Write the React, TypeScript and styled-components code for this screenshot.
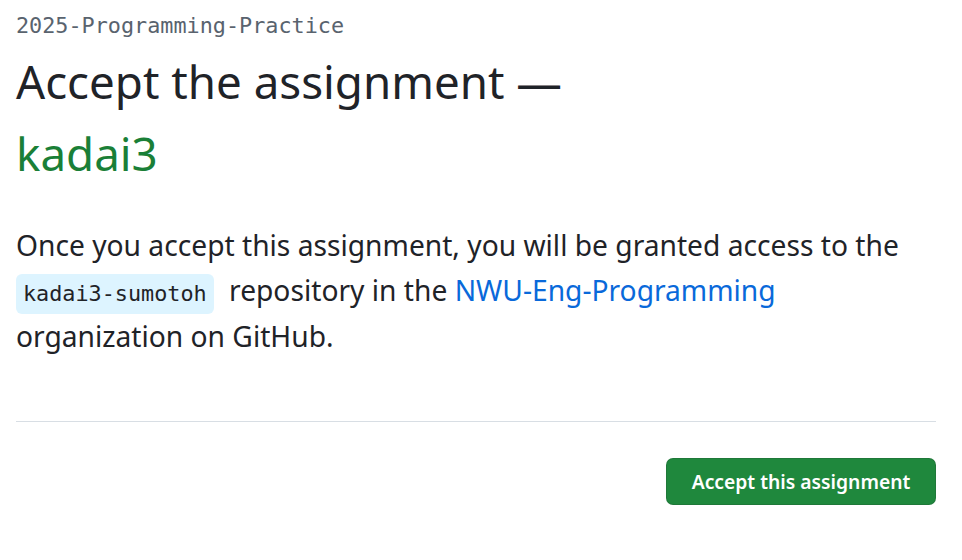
import React from "react";
import styled, { createGlobalStyle } from "styled-components";

const GlobalStyle = createGlobalStyle`
  html, body { margin: 0; padding: 0; background: #ffffff; }
  body {
    font-family: "Noto Sans", "Open Sans", sans-serif;
    color: #1f2328;
  }
`;

const Page = styled.main`
  width: 920px;
  padding: 12px 26px 0 16px;
  display: flex;
  flex-direction: column;
`;

const OrgLabel = styled.div`
  font-family: "DejaVu Sans Mono", "Liberation Mono", monospace;
  font-size: 21.8px;
  line-height: 28px;
  color: #59636e;
`;

const Title = styled.h1`
  margin: 5px 0 0;
  font-size: 45.7px;
  line-height: 72px;
  font-weight: 400;
  color: #1f2328;
`;

const AssignmentName = styled.span`
  color: #1a7f37;
`;

const Description = styled.p`
  margin: 34px 0 0;
  font-size: 28.2px;
  line-height: 45px;
  color: #1f2328;
`;

const Code = styled.code`
  display: inline-block;
  font-family: "DejaVu Sans Mono", "Liberation Mono", monospace;
  font-size: 21.8px;
  line-height: 26px;
  padding: 7px 7px;
  margin-right: 8px;
  background: #ddf4ff;
  border-radius: 6px;
  color: #1f2328;
`;

const OrgLink = styled.a`
  color: #0969da;
  text-decoration: none;
`;

const Divider = styled.hr`
  margin: 62px 0 0;
  border: 0;
  border-top: 1px solid #d8dee4;
  height: 0;
`;

const Actions = styled.div`
  display: flex;
  justify-content: flex-end;
  padding-top: 36px;
`;

const AcceptButton = styled.button`
  width: 270px;
  height: 47px;
  border: 1px solid rgba(31, 35, 40, 0.15);
  border-radius: 7px;
  background: #1f883d;
  color: #ffffff;
  font-family: "Noto Sans", "Open Sans", sans-serif;
  font-size: 19.3px;
  font-weight: 600;
  cursor: pointer;
`;

export default function App() {
  return (
    <>
      <GlobalStyle />
      <Page>
        <OrgLabel>2025-Programming-Practice</OrgLabel>
        <Title>
          Accept the assignment —
          <br />
          <AssignmentName>kadai3</AssignmentName>
        </Title>
        <Description>
          Once you accept this assignment, you will be granted access to the{" "}
          <Code>kadai3-sumotoh</Code> repository in the{" "}
          <OrgLink href="#">NWU-Eng-Programming</OrgLink> organization on GitHub.
        </Description>
        <Divider />
        <Actions>
          <AcceptButton type="button">Accept this assignment</AcceptButton>
        </Actions>
      </Page>
    </>
  );
}
